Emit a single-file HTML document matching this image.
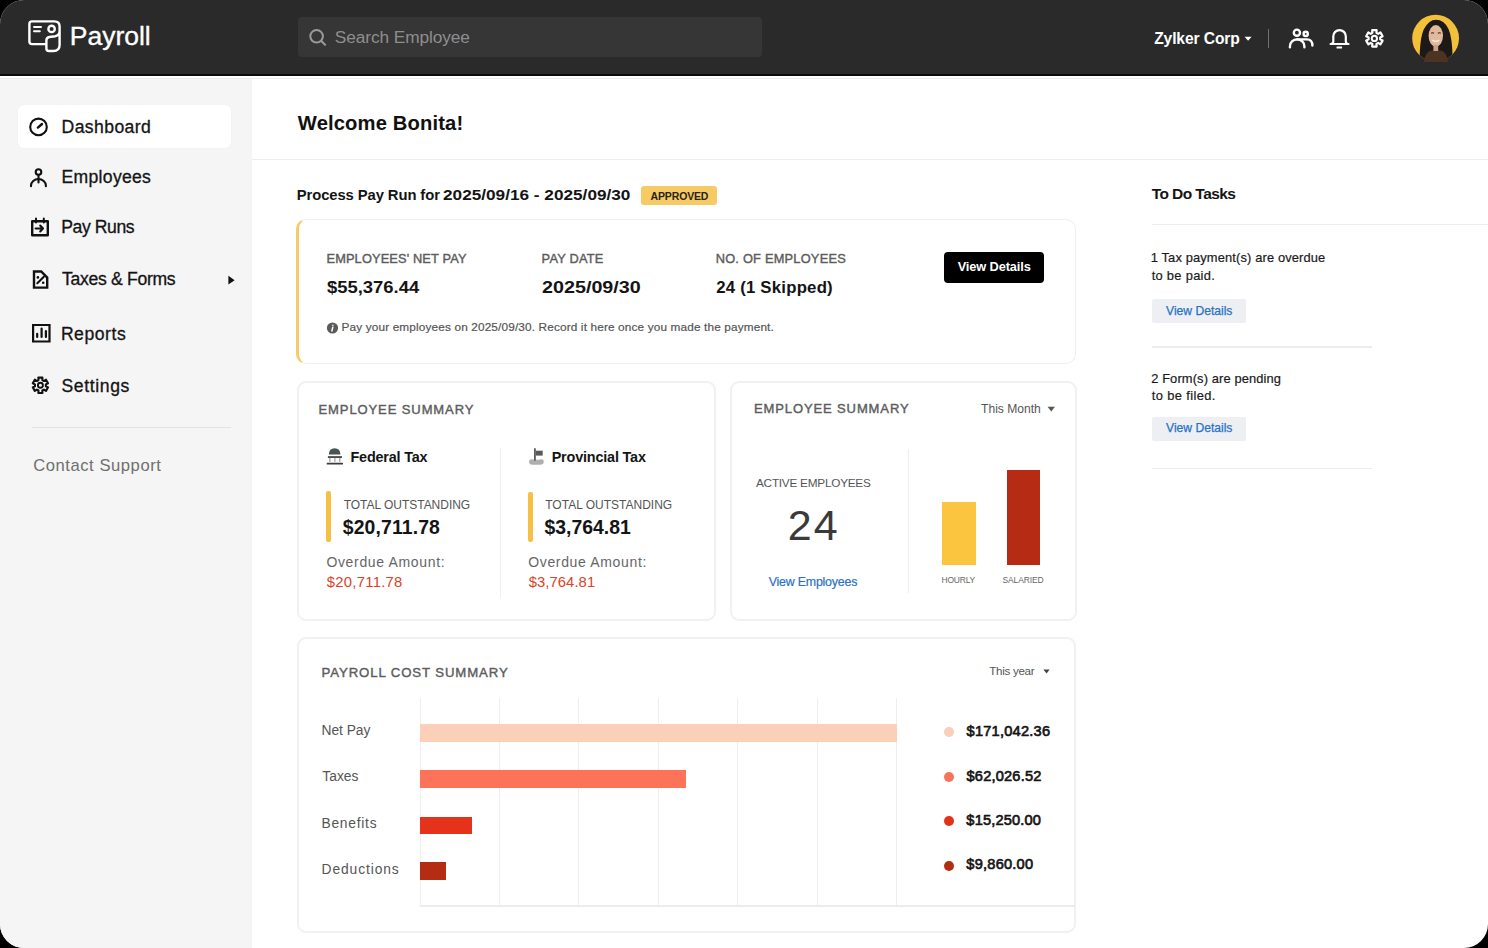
<!DOCTYPE html>
<html><head><meta charset="utf-8"><title>Payroll Dashboard</title><style>
*{margin:0;padding:0;box-sizing:border-box}
html,body{width:1488px;height:948px;overflow:hidden;background:#000}
body{font-family:"Liberation Sans",sans-serif;position:relative}
#app{position:absolute;left:0;top:0;width:1488px;height:948px;border-radius:24px;overflow:hidden;background:#fff}
.b{position:absolute}
.t{position:absolute;white-space:pre;line-height:1;font-family:"Liberation Sans",sans-serif}
.ic{position:absolute;overflow:visible}
</style></head>
<body><div id="app">

<div class="b" style="left:0;top:0;width:1488px;height:74px;background:#2a2a2a"></div>
<div class="b" style="left:0;top:74px;width:1488px;height:1.6px;background:#0b0b0b"></div>
<div class="b" style="left:0;top:78px;width:1488px;height:1px;background:#ececec"></div>
<div class="b" style="left:0;top:79px;width:252px;height:869px;background:#f5f5f5"></div>
<div class="b" style="left:298px;top:17px;width:464px;height:40px;background:#363636;border-radius:4px"></div>
<div class="b" style="left:1267.6px;top:29px;width:1.8px;height:19px;background:#707070"></div>
<div class="b" style="left:17.6px;top:105px;width:213px;height:42.5px;background:#fff;border-radius:6px;box-shadow:0 0 2px rgba(0,0,0,0.04)"></div>
<div class="b" style="left:32px;top:426.5px;width:199px;height:1.4px;background:#e2e2e2"></div>
<div class="b" style="left:252px;top:158.5px;width:1236px;height:1.4px;background:#eeeeee"></div>
<div class="b" style="left:640.8px;top:186.4px;width:76.6px;height:18.4px;background:#f6cb66;border-radius:3px"></div>
<div class="b" style="left:296.4px;top:219.4px;width:780px;height:144.2px;border:1.6px solid #efefef;border-left:3.6px solid #f3cb68;border-radius:10px"></div>
<div class="b" style="left:944px;top:252.2px;width:100.3px;height:31px;background:#000;border-radius:4px"></div>
<div class="b" style="left:297px;top:381px;width:418.5px;height:240px;border:2px solid #f1f1f1;border-radius:9px"></div>
<div class="b" style="left:500px;top:448px;width:1.4px;height:150px;background:#efefef"></div>
<div class="b" style="left:326.4px;top:491.4px;width:4.4px;height:50.4px;background:#f5c044;border-radius:2px"></div>
<div class="b" style="left:528.2px;top:492.2px;width:4.4px;height:50px;background:#f5c044;border-radius:2px"></div>
<div class="b" style="left:730px;top:381px;width:346.5px;height:240px;border:2px solid #f1f1f1;border-radius:9px"></div>
<div class="b" style="left:907.6px;top:448.5px;width:1.4px;height:144px;background:#eeeeee"></div>
<div class="b" style="left:942.2px;top:501.8px;width:33.6px;height:63.2px;background:#fbc540"></div>
<div class="b" style="left:1006.8px;top:469.7px;width:33.2px;height:95.3px;background:#b52b14"></div>
<div class="b" style="left:296.5px;top:637.4px;width:779.5px;height:295.6px;border:2px solid #f1f1f1;border-radius:9px"></div>

<div class="b" style="left:419.9px;top:698px;width:1.4px;height:208px;background:#eeeeee"></div>
<div class="b" style="left:498.5px;top:698px;width:1.4px;height:208px;background:#eeeeee"></div>
<div class="b" style="left:577.9px;top:698px;width:1.4px;height:208px;background:#eeeeee"></div>
<div class="b" style="left:657.5px;top:698px;width:1.4px;height:208px;background:#eeeeee"></div>
<div class="b" style="left:736.9px;top:698px;width:1.4px;height:208px;background:#eeeeee"></div>
<div class="b" style="left:816.5px;top:698px;width:1.4px;height:208px;background:#eeeeee"></div>
<div class="b" style="left:895.9px;top:698px;width:1.4px;height:208px;background:#eeeeee"></div>
<div class="b" style="left:420px;top:905.2px;width:655px;height:1.5px;background:#ececec"></div>
<div class="b" style="left:420.3px;top:724.2px;width:476.3px;height:17.5px;background:#fccfb9"></div>
<div class="b" style="left:420.3px;top:770.0px;width:265.8px;height:17.5px;background:#fc735a"></div>
<div class="b" style="left:420.3px;top:816.5px;width:51.9px;height:17.5px;background:#e5331b"></div>
<div class="b" style="left:420.3px;top:862.4px;width:26.0px;height:17.5px;background:#b52c14"></div>
<div class="b" style="left:944.4px;top:727.4px;width:9.8px;height:9.8px;border-radius:50%;background:#f9cfbb"></div>
<div class="b" style="left:944.4px;top:772.3px;width:9.8px;height:9.8px;border-radius:50%;background:#f6735c"></div>
<div class="b" style="left:944.4px;top:816.4px;width:9.8px;height:9.8px;border-radius:50%;background:#e3321b"></div>
<div class="b" style="left:944.4px;top:861.1px;width:9.8px;height:9.8px;border-radius:50%;background:#b52c14"></div>

<div class="b" style="left:1151.5px;top:223.6px;width:337px;height:1.4px;background:#ececec"></div>
<div class="b" style="left:1151.5px;top:298.6px;width:94px;height:24.2px;background:#edeff2;border-radius:2px"></div>
<div class="b" style="left:1151.5px;top:346.2px;width:220.5px;height:1.4px;background:#ececec"></div>
<div class="b" style="left:1151.5px;top:416.5px;width:94px;height:24.4px;background:#edeff2;border-radius:2px"></div>
<div class="b" style="left:1151.5px;top:468px;width:220.5px;height:1.4px;background:#ececec"></div>

<svg class="ic" style="left:22px;top:14px;" width="44" height="44" viewBox="22 14 44 44"><g fill="none" stroke="#fff" stroke-width="2.4" stroke-linecap="round" stroke-linejoin="round"><path d="M46.4 44.1 H31.9 Q29.4 44.1 29.4 41.6 V23.9 Q29.4 21.4 31.9 21.4 H54.4 Q59.6 21.4 59.6 26.6 V45 Q59.6 51 53.4 51 H49 Q46.4 51 46.4 48.4 V40.3 Q46.4 37.4 49.4 37 L55.2 36.2 Q59.6 35.4 59.6 31"/><circle cx="51.6" cy="28.9" r="3.2"/><path d="M34 27 H41" stroke-width="2"/><path d="M34 31.2 H39.8" stroke-width="2"/></g></svg>
<svg class="ic" style="left:305px;top:25px;" width="26" height="26" viewBox="305 25 26 26"><g fill="none" stroke="#9a9a9a" stroke-width="2" stroke-linecap="round"><circle cx="316.6" cy="36.3" r="6.3"/><path d="M321.6 41.3 L325.1 44.8"/></g></svg>
<svg class="ic" style="left:1243px;top:35px;" width="10" height="8" viewBox="1243 35 10 8"><path d="M1244.6 36.8 H1251.6 L1248.1 40.8 Z" fill="#fff"/></svg>
<svg class="ic" style="left:1285px;top:25px;" width="32" height="27" viewBox="1285 25 32 27"><g fill="none" stroke="#fff" stroke-width="2.4" stroke-linecap="round" stroke-linejoin="round"><circle cx="1296.9" cy="32.7" r="3.1"/><circle cx="1305.7" cy="33.9" r="2.1"/><path d="M1289.9 47.2 V46.4 A7.25 7 0 0 1 1304.4 46.4 V47.2"/><path d="M1297.2 39.4 H1307 Q1312.4 39.6 1312.4 45.6"/></g></svg>
<svg class="ic" style="left:1327px;top:25px;" width="26" height="26" viewBox="1327 25 26 26"><g fill="none" stroke="#fff" stroke-width="2.2" stroke-linecap="round" stroke-linejoin="round"><path d="M1332 43.6 Q1333.3 43 1333.3 41.5 V36.3 A6.25 6.25 0 0 1 1345.8 36.3 V41.5 Q1345.8 43 1347.1 43.6"/><path d="M1330.6 44 H1348.5"/></g><rect x="1336.5" y="46.4" width="5.6" height="2.2" rx="0.6" fill="#fff"/></svg>
<svg class="ic" style="left:1362px;top:27px;" width="25" height="25" viewBox="1362 27 25 25"><g fill="none" stroke="#fff" stroke-width="2.2" stroke-linejoin="round"><path d="M1372.34 32.87 L1372.20 30.19 L1376.60 30.19 L1376.46 32.87 L1378.16 33.85 L1380.41 32.39 L1382.61 36.20 L1380.22 37.42 L1380.22 39.38 L1382.61 40.60 L1380.41 44.41 L1378.16 42.95 L1376.46 43.93 L1376.60 46.61 L1372.20 46.61 L1372.34 43.93 L1370.64 42.95 L1368.39 44.41 L1366.19 40.60 L1368.58 39.38 L1368.58 37.42 L1366.19 36.20 L1368.39 32.39 L1370.64 33.85 Z"/><circle cx="1374.4" cy="38.4" r="2.6" stroke-width="2"/></g></svg>
<svg class="ic" style="left:27px;top:115px;" width="24" height="24" viewBox="27 115 24 24"><g fill="none" stroke="#111" stroke-width="2.1" stroke-linecap="round"><circle cx="38.5" cy="126.9" r="8.3"/><path d="M37.9 127.6 L42 124" stroke-width="2.4"/></g></svg>
<svg class="ic" style="left:27px;top:166px;" width="24" height="24" viewBox="27 166 24 24"><g fill="none" stroke="#111" stroke-width="2.1" stroke-linecap="round"><circle cx="38.5" cy="172.1" r="2.8"/><path d="M31 186.3 V185.6 A7.45 6.6 0 0 1 45.9 185.6 V186.3"/><path d="M38.5 175.5 V182.4"/></g></svg>
<svg class="ic" style="left:27px;top:214px;" width="26" height="26" viewBox="27 214 26 26"><g fill="none" stroke="#111" stroke-width="2.4" stroke-linecap="round" stroke-linejoin="round"><path d="M32.2 221.2 H47.8 V235.3 H32.2 Z" stroke-linecap="square"/><path d="M36 218.4 V222.4 M43.8 218.4 V222.4" stroke-width="2"/><path d="M35.6 228.5 H43 M40.2 225.6 L43 228.5 L40.2 231.4" stroke-width="2.1"/></g></svg>
<svg class="ic" style="left:28px;top:266px;" width="24" height="26" viewBox="28 266 24 26"><g fill="none" stroke="#111" stroke-width="2.4" stroke-linejoin="miter"><path d="M34 271.5 H41.2 L47.2 277.6 V287.6 H34 Z"/></g><path d="M37.3 283.3 L43.8 276.8" stroke="#111" stroke-width="2" stroke-linecap="round"/><circle cx="37.9" cy="277.4" r="1.3" fill="#111"/><circle cx="43.2" cy="282.8" r="1.3" fill="#111"/></svg>
<svg class="ic" style="left:29px;top:320px;" width="24" height="26" viewBox="29 320 24 26"><g fill="none" stroke="#111" stroke-width="2.2"><path d="M33.1 325 H49.5 V341.5 H33.1 Z"/></g><g stroke="#111" stroke-width="2.2" stroke-linecap="round"><path d="M37.2 333.8 V336.9 M41.6 328.6 V336.9 M45.9 331.2 V336.9"/></g></svg>
<svg class="ic" style="left:28px;top:373px;" width="25" height="25" viewBox="28 373 25 25"><g fill="none" stroke="#111" stroke-width="2.1" stroke-linejoin="round"><path d="M38.48 380.14 L38.36 377.67 L42.44 377.67 L42.32 380.14 L43.91 381.06 L45.99 379.71 L48.03 383.26 L45.82 384.38 L45.82 386.22 L48.03 387.34 L45.99 390.89 L43.91 389.54 L42.32 390.46 L42.44 392.93 L38.36 392.93 L38.48 390.46 L36.89 389.54 L34.81 390.89 L32.77 387.34 L34.98 386.22 L34.98 384.38 L32.77 383.26 L34.81 379.71 L36.89 381.06 Z"/><circle cx="40.4" cy="385.3" r="2.5" stroke-width="1.9"/></g></svg>
<svg class="ic" style="left:225px;top:273px;" width="14" height="14" viewBox="225 273 14 14"><path d="M228.4 275.8 L234.6 280.2 L228.4 284.6 Z" fill="#111"/></svg>
<svg class="ic" style="left:325px;top:320px;" width="16" height="16" viewBox="325 320 16 16"><circle cx="332.5" cy="328" r="5.6" fill="#5a5a5a"/><path d="M332.9 325.2 v0.1" stroke="#fff" stroke-width="1.6" stroke-linecap="round"/><path d="M332.8 327.2 L331.9 331" stroke="#fff" stroke-width="1.5" stroke-linecap="round"/></svg>
<svg class="ic" style="left:325px;top:446px;" width="20" height="20" viewBox="325 446 20 20"><path d="M328.8 454.6 Q329.2 448.2 334.6 448.2 Q340.1 448.2 340.5 454.6 Z" fill="#4d5252"/><rect x="327.9" y="456.2" width="14.1" height="1.7" fill="#3a3a3a"/><rect x="329.1" y="458" width="1.5" height="3.8" fill="#b0b0b0"/><rect x="334.1" y="458" width="1.5" height="3.8" fill="#b0b0b0"/><rect x="339" y="458" width="1.5" height="3.8" fill="#b0b0b0"/><rect x="326.7" y="462.8" width="16.3" height="1.6" rx="0.5" fill="#3a3a3a"/></svg>
<svg class="ic" style="left:526px;top:446px;" width="20" height="20" viewBox="526 446 20 20"><path d="M529 461.5 Q529 459 532 459.2 Q537 460.2 541 459.2 Q543.8 458.8 543.8 461.5 Q543.8 464.8 540 464.8 H532.5 Q529 464.8 529 461.5 Z" fill="#aeb0b0"/><rect x="534" y="448.3" width="1.8" height="12.4" fill="#5a5a5a"/><rect x="535.8" y="450.7" width="6.9" height="4.9" fill="#5a5a5a"/></svg>
<svg class="ic" style="left:1046px;top:405px;" width="11" height="9" viewBox="1046 405 11 9"><path d="M1047.6 406.7 H1054.9 L1051.25 411.4 Z" fill="#555"/></svg>
<svg class="ic" style="left:1042px;top:668px;" width="10" height="8" viewBox="1042 668 10 8"><path d="M1043.4 669.6 H1049.7 L1046.55 673.6 Z" fill="#444"/></svg>
<svg class="ic" style="left:1406px;top:10px" width="60" height="56" viewBox="1406 10 60 56">
<defs><clipPath id="av"><circle cx="1435.6" cy="38.2" r="23.4"/></clipPath></defs>
<circle cx="1435.6" cy="38.2" r="23.4" fill="#f3c03a"/>
<g clip-path="url(#av)">
<path d="M1419.5 64 Q1419.5 38 1424 29 Q1429 19.8 1436 19.8 Q1444 19.8 1448.5 29 Q1453 39 1452.5 64 Z" fill="#1d1916"/>
</g>
<ellipse cx="1435.8" cy="35.8" rx="7.2" ry="10.8" fill="#e2b99a"/>
<path d="M1431 33.2 q1.6-0.9 3 0 M1437.8 33.2 q1.6-0.9 3 0" stroke="#3a2a22" stroke-width="1.2" fill="none"/>
<path d="M1432.3 40.2 q3.5 2.4 7 0" stroke="#f4eee8" stroke-width="1.5" fill="none"/>
<path d="M1424 62 Q1425 52 1431 50.5 H1441 Q1447 52 1448 62 Z" fill="#4c3322"/>
<rect x="1433.4" y="45" width="4.8" height="6" fill="#cf9f80"/>
</svg>
<div class="t" style="left:69.78px;top:22.98px;font-size:26.5px;font-weight:400;color:#ffffff;letter-spacing:-0.003px;-webkit-text-stroke:0.35px #fff;">Payroll</div>
<div class="t" style="left:334.83px;top:29.09px;font-size:17.3px;font-weight:400;color:#8e8e8e;letter-spacing:-0.089px;">Search Employee</div>
<div class="t" style="left:1154.13px;top:30.94px;font-size:15.6px;font-weight:700;color:#ffffff;letter-spacing:-0.094px;">Zylker Corp</div>
<div class="t" style="left:61.59px;top:119.04px;font-size:17.6px;font-weight:400;color:#141414;letter-spacing:0.400px;-webkit-text-stroke:0.3px #141414;">Dashboard</div>
<div class="t" style="left:61.59px;top:169.34px;font-size:17.6px;font-weight:400;color:#141414;letter-spacing:0.287px;-webkit-text-stroke:0.3px #141414;">Employees</div>
<div class="t" style="left:61.19px;top:218.64px;font-size:17.6px;font-weight:400;color:#141414;letter-spacing:-0.410px;-webkit-text-stroke:0.3px #141414;">Pay Runs</div>
<div class="t" style="left:62.05px;top:271.04px;font-size:17.6px;font-weight:400;color:#141414;letter-spacing:-0.311px;-webkit-text-stroke:0.3px #141414;">Taxes &amp; Forms</div>
<div class="t" style="left:60.89px;top:325.74px;font-size:17.6px;font-weight:400;color:#141414;letter-spacing:0.539px;-webkit-text-stroke:0.3px #141414;">Reports</div>
<div class="t" style="left:61.42px;top:377.94px;font-size:17.6px;font-weight:400;color:#141414;letter-spacing:0.625px;-webkit-text-stroke:0.3px #141414;">Settings</div>
<div class="t" style="left:33.17px;top:458.09px;font-size:16.6px;font-weight:400;color:#6f6f6f;letter-spacing:0.556px;">Contact Support</div>
<div class="t" style="left:297.80px;top:112.63px;font-size:20.2px;font-weight:700;color:#111111;letter-spacing:0.143px;">Welcome Bonita!</div>
<div class="t" style="left:296.76px;top:188.22px;font-size:14.8px;font-weight:700;color:#141414;letter-spacing:-0.087px;">Process Pay Run for</div>
<div class="t" style="left:443.48px;top:188.22px;font-size:14.8px;font-weight:700;color:#141414;transform:scaleX(1.1623);transform-origin:0 0;">2025/09/16 - 2025/09/30</div>
<div class="t" style="left:650.58px;top:190.97px;font-size:10.5px;font-weight:700;color:#2b2312;letter-spacing:-0.153px;">APPROVED</div>
<div class="t" style="left:326.48px;top:252.52px;font-size:12.8px;font-weight:400;color:#5c5c5c;letter-spacing:0.140px;-webkit-text-stroke:0.4px #5c5c5c;">EMPLOYEES' NET PAY</div>
<div class="t" style="left:326.82px;top:279.92px;font-size:16.8px;font-weight:700;color:#141414;transform:scaleX(1.0974);transform-origin:0 0;">$55,376.44</div>
<div class="t" style="left:541.58px;top:252.52px;font-size:12.8px;font-weight:400;color:#5c5c5c;letter-spacing:0.225px;-webkit-text-stroke:0.4px #5c5c5c;">PAY DATE</div>
<div class="t" style="left:542.01px;top:279.92px;font-size:16.8px;font-weight:700;color:#141414;transform:scaleX(1.1760);transform-origin:0 0;">2025/09/30</div>
<div class="t" style="left:715.68px;top:252.52px;font-size:12.8px;font-weight:400;color:#5c5c5c;letter-spacing:0.230px;-webkit-text-stroke:0.4px #5c5c5c;">NO. OF EMPLOYEES</div>
<div class="t" style="left:716.20px;top:279.92px;font-size:16.8px;font-weight:700;color:#141414;letter-spacing:0.211px;">24 (1 Skipped)</div>
<div class="t" style="left:957.67px;top:261.02px;font-size:12.8px;font-weight:700;color:#ffffff;letter-spacing:-0.114px;">View Details</div>
<div class="t" style="left:341.56px;top:322.37px;font-size:11.8px;font-weight:400;color:#555555;letter-spacing:0.143px;-webkit-text-stroke:0.2px #555;">Pay your employees on 2025/09/30. Record it here once you made the payment.</div>
<div class="t" style="left:318.56px;top:402.65px;font-size:13.0px;font-weight:400;color:#5c5c5c;letter-spacing:0.899px;-webkit-text-stroke:0.4px #5c5c5c;">EMPLOYEE SUMMARY</div>
<div class="t" style="left:350.49px;top:449.56px;font-size:14.4px;font-weight:700;color:#141414;letter-spacing:-0.186px;">Federal Tax</div>
<div class="t" style="left:551.69px;top:449.76px;font-size:14.4px;font-weight:700;color:#141414;letter-spacing:-0.175px;">Provincial Tax</div>
<div class="t" style="left:343.66px;top:499.00px;font-size:12.0px;font-weight:400;color:#555555;letter-spacing:-0.022px;">TOTAL OUTSTANDING</div>
<div class="t" style="left:545.26px;top:499.00px;font-size:12.0px;font-weight:400;color:#555555;letter-spacing:0.002px;">TOTAL OUTSTANDING</div>
<div class="t" style="left:342.81px;top:518.01px;font-size:19.4px;font-weight:700;color:#141414;letter-spacing:0.116px;">$20,711.78</div>
<div class="t" style="left:544.41px;top:518.11px;font-size:19.4px;font-weight:700;color:#141414;letter-spacing:0.006px;">$3,764.81</div>
<div class="t" style="left:326.40px;top:554.90px;font-size:14.0px;font-weight:400;color:#666666;letter-spacing:0.667px;">Overdue Amount:</div>
<div class="t" style="left:528.20px;top:555.40px;font-size:14.0px;font-weight:400;color:#666666;letter-spacing:0.660px;">Overdue Amount:</div>
<div class="t" style="left:326.85px;top:574.72px;font-size:14.8px;font-weight:400;color:#d8432a;letter-spacing:0.275px;">$20,711.78</div>
<div class="t" style="left:528.75px;top:575.22px;font-size:14.8px;font-weight:400;color:#d8432a;letter-spacing:0.066px;">$3,764.81</div>
<div class="t" style="left:753.96px;top:402.25px;font-size:13.0px;font-weight:400;color:#5c5c5c;letter-spacing:0.886px;-webkit-text-stroke:0.4px #5c5c5c;">EMPLOYEE SUMMARY</div>
<div class="t" style="left:981.06px;top:402.51px;font-size:12.1px;font-weight:400;color:#555555;letter-spacing:-0.012px;">This Month</div>
<div class="t" style="left:756.00px;top:477.97px;font-size:11.8px;font-weight:400;color:#555555;letter-spacing:-0.255px;">ACTIVE EMPLOYEES</div>
<div class="t" style="left:787.65px;top:503.85px;font-size:43.0px;font-weight:400;color:#3a3a3a;letter-spacing:2.310px;">24</div>
<div class="t" style="left:768.68px;top:576.16px;font-size:12.4px;font-weight:400;color:#2a72c4;letter-spacing:-0.207px;-webkit-text-stroke:0.2px #2a72c4;">View Employees</div>
<div class="t" style="left:941.52px;top:576.48px;font-size:8.5px;font-weight:400;color:#666666;letter-spacing:-0.203px;">HOURLY</div>
<div class="t" style="left:1002.38px;top:576.48px;font-size:8.5px;font-weight:400;color:#666666;letter-spacing:-0.104px;">SALARIED</div>
<div class="t" style="left:321.54px;top:665.98px;font-size:13.2px;font-weight:400;color:#5c5c5c;letter-spacing:0.893px;-webkit-text-stroke:0.4px #5c5c5c;">PAYROLL COST SUMMARY</div>
<div class="t" style="left:989.17px;top:665.44px;font-size:11.6px;font-weight:400;color:#555555;letter-spacing:-0.278px;">This year</div>
<div class="t" style="left:321.50px;top:724.07px;font-size:13.8px;font-weight:400;color:#555555;letter-spacing:-0.031px;">Net Pay</div>
<div class="t" style="left:322.32px;top:769.87px;font-size:13.8px;font-weight:400;color:#555555;letter-spacing:0.000px;">Taxes</div>
<div class="t" style="left:321.50px;top:816.67px;font-size:13.8px;font-weight:400;color:#555555;letter-spacing:0.743px;">Benefits</div>
<div class="t" style="left:321.50px;top:862.57px;font-size:13.8px;font-weight:400;color:#555555;letter-spacing:0.913px;">Deductions</div>
<div class="t" style="left:966.55px;top:723.99px;font-size:14.6px;font-weight:400;color:#141414;letter-spacing:0.235px;-webkit-text-stroke:0.65px #141414;">$171,042.36</div>
<div class="t" style="left:966.55px;top:768.79px;font-size:14.6px;font-weight:400;color:#141414;letter-spacing:0.197px;-webkit-text-stroke:0.65px #141414;">$62,026.52</div>
<div class="t" style="left:966.35px;top:812.59px;font-size:14.6px;font-weight:400;color:#141414;letter-spacing:0.176px;-webkit-text-stroke:0.65px #141414;">$15,250.00</div>
<div class="t" style="left:966.35px;top:856.89px;font-size:14.6px;font-weight:400;color:#141414;letter-spacing:0.220px;-webkit-text-stroke:0.65px #141414;">$9,860.00</div>
<div class="t" style="left:1151.64px;top:186.12px;font-size:15.5px;font-weight:700;color:#141414;letter-spacing:-0.552px;">To Do Tasks</div>
<div class="t" style="left:1150.77px;top:252.34px;font-size:12.9px;font-weight:400;color:#1a1a1a;letter-spacing:0.129px;-webkit-text-stroke:0.2px #1a1a1a;">1 Tax payment(s) are overdue</div>
<div class="t" style="left:1151.67px;top:270.04px;font-size:12.9px;font-weight:400;color:#1a1a1a;letter-spacing:0.295px;-webkit-text-stroke:0.2px #1a1a1a;">to be paid.</div>
<div class="t" style="left:1166.08px;top:304.61px;font-size:12.1px;font-weight:400;color:#2a72c4;letter-spacing:-0.002px;-webkit-text-stroke:0.25px #2a72c4;">View Details</div>
<div class="t" style="left:1151.15px;top:372.94px;font-size:12.9px;font-weight:400;color:#1a1a1a;letter-spacing:0.117px;-webkit-text-stroke:0.2px #1a1a1a;">2 Form(s) are pending</div>
<div class="t" style="left:1151.67px;top:389.74px;font-size:12.9px;font-weight:400;color:#1a1a1a;letter-spacing:0.390px;-webkit-text-stroke:0.2px #1a1a1a;">to be filed.</div>
<div class="t" style="left:1166.08px;top:422.41px;font-size:12.1px;font-weight:400;color:#2a72c4;letter-spacing:-0.002px;-webkit-text-stroke:0.25px #2a72c4;">View Details</div>
</div></body></html>
